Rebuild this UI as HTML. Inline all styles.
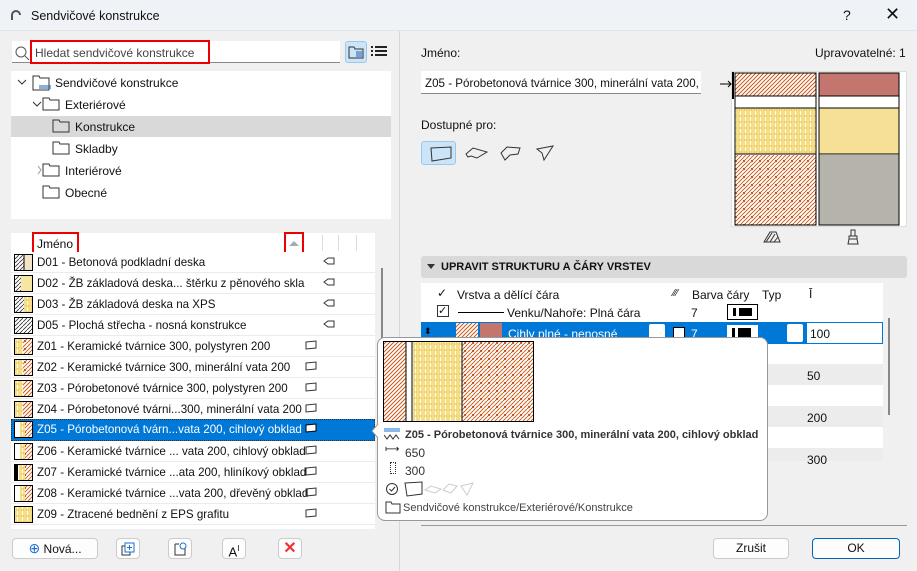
<!DOCTYPE html>
<html><head><meta charset="utf-8"><style>
*{box-sizing:border-box;margin:0;padding:0}
body{width:917px;height:571px;overflow:hidden;background:#f0f0f0;font-family:"Liberation Sans",sans-serif;font-size:12px;color:#111;position:relative}
.a{position:absolute}
.t{white-space:nowrap}
.row{position:absolute;left:11px;width:364px;height:21px;border-bottom:1px solid #ebebeb;background:#fff;font-size:11.6px}
.row .ic{position:absolute;left:3px;top:2px;width:19px;height:17px;border:1px solid #000}
.row .tx{position:absolute;left:26px;top:4px;white-space:nowrap}
.row .sy{position:absolute;top:4px;width:12px;height:10px}
.btn{position:absolute;background:#fdfdfd;border:1px solid #ccc;border-radius:4px;height:21px;text-align:center;line-height:19px}
</style></head><body>
<svg width="0" height="0" style="position:absolute"><defs>
<pattern id="br" width="4" height="4" patternUnits="userSpaceOnUse"><rect width="4" height="4" fill="#fff"/><path d="M0 4L4 0M-1 1L1 -1M3 5L5 3" stroke="#c8591a" stroke-width="1"/></pattern>
<pattern id="yl" width="5" height="6" patternUnits="userSpaceOnUse"><rect width="5" height="6" fill="#fffbe6"/><path d="M1 0V6M4 0V6M1 3H4" stroke="#e8c030" stroke-width="1" fill="none"/></pattern>
<pattern id="pb" width="8" height="8" patternUnits="userSpaceOnUse"><rect width="8" height="8" fill="#fff"/><path d="M0 8L8 0M-2 2L2 -2M6 10L10 6M0 4L4 0M4 8L8 4" stroke="#c8591a" stroke-width="0.9"/><rect x="1" y="1" width="2" height="2" fill="#c8591a"/></pattern>
<pattern id="gr" width="4" height="4" patternUnits="userSpaceOnUse"><rect width="4" height="4" fill="#fff"/><path d="M0 4L4 0" stroke="#333" stroke-width="0.8"/></pattern>
</defs></svg>

<div class="a" style="left:0;top:0;width:917px;height:31px;background:#eff2f7;border-bottom:1px solid #e3e3e3"></div>
<div class="a t" style="left:31px;top:9px;font-size:12.5px">Sendvičové konstrukce</div>
<svg class="a" style="left:10px;top:9px" width="12" height="12"><path d="M2 11V6a4 4 0 0 1 8 0" stroke="#555" stroke-width="2" fill="none"/></svg>
<div class="a t" style="left:843px;top:7px;font-size:14px">?</div>
<div class="a t" style="left:885px;top:4px;font-size:18px">✕</div>

<div class="a" style="left:399px;top:31px;width:1px;height:540px;background:#d8d8d8"></div>

<div class="a" style="left:12px;top:41px;width:328px;height:22px;background:#fff;border-bottom:1px solid #888"></div>
<svg class="a" style="left:14px;top:45px" width="16" height="16"><circle cx="7" cy="7" r="5" stroke="#555" fill="none"/><path d="M11 11L15 15" stroke="#555"/></svg>
<div class="a" style="left:30px;top:40px;width:180px;height:24px;border:2px solid #e00"></div>
<div class="a t" style="left:35px;top:46px;color:#444">Hledat sendvičové konstrukce</div>
<div class="a" style="left:345px;top:41px;width:22px;height:22px;background:#cce4f7;border:1px solid #99c9ef;border-radius:3px"></div>
<svg class="a" style="left:348px;top:45px" width="16" height="14"><path d="M1 2H6L7 4H15V13H1Z" stroke="#333" fill="none"/><path d="M8 7H14M8 9H14M8 11H14" stroke="#1a5fb4"/></svg>
<svg class="a" style="left:371px;top:46px" width="16" height="12"><path d="M0 1H2M4 1H16M0 5H2M4 5H16M0 9H2M4 9H16" stroke="#222" stroke-width="2"/></svg>

<div class="a" style="left:11px;top:71px;width:380px;height:148px;background:#fff"></div>
<div class="a" style="left:11px;top:116px;width:380px;height:21px;background:#d9d9d9"></div>
<svg class="a" style="left:11px;top:71px" width="150" height="148">
<g stroke="#333" fill="none">
<path d="M7 9l4 4 4-4"/><path d="M22 31l4 4 4-4"/><path d="M27 95l3 4-3 4" stroke="#999"/>
<path d="M22 5h6l1 2h9v12H22Z"/><path d="M28 15h12M28 17h12" stroke="#1a5fb4"/>
<path d="M32 27h6l1 2h9v10H32Z"/>
<path d="M42 49h6l1 2h9v10H42Z"/><path d="M42 71h6l1 2h9v10H42Z"/>
<path d="M32 93h6l1 2h9v10H32Z"/><path d="M32 115h6l1 2h9v10H32Z"/>
</g></svg>
<div class="a t" style="left:55px;top:76px">Sendvičové konstrukce</div>
<div class="a t" style="left:65px;top:98px">Exteriérové</div>
<div class="a t" style="left:75px;top:120px">Konstrukce</div>
<div class="a t" style="left:75px;top:142px">Skladby</div>
<div class="a t" style="left:65px;top:164px">Interiérové</div>
<div class="a t" style="left:65px;top:186px">Obecné</div>

<div class="a" style="left:11px;top:233px;width:364px;height:20px;background:#fff"></div>
<div class="a" style="left:322px;top:235px;width:1px;height:16px;background:#ddd"></div>
<div class="a" style="left:338px;top:235px;width:1px;height:16px;background:#ddd"></div>
<div class="a" style="left:356px;top:235px;width:1px;height:16px;background:#ddd"></div>
<div class="a" style="left:32px;top:232px;width:47px;height:22px;border:2px solid #e00"></div>
<div class="a t" style="left:37px;top:237px">Jméno</div>
<div class="a" style="left:284px;top:232px;width:20px;height:22px;border:2px solid #e00"></div>
<svg class="a" style="left:288px;top:240px" width="12" height="8"><path d="M1 6L6 1L11 6Z" fill="#aaa"/></svg>

<div class="row" style="top:252px"><div class="ic"><svg width="17" height="15"><rect width="9" height="15" fill="url(#gr)"/><rect x="9" width="8" height="15" fill="#f3e3c8"/><path d="M9 0V15" stroke="#000"/></svg></div><div class="tx">D01 - Betonová podkladní deska</div><svg class="sy" style="left:312px" viewBox="0 0 12 10"><path d="M1 5L5 2H11V8H5Z" stroke="#333" fill="none"/></svg></div>
<div class="row" style="top:273px"><div class="ic"><svg width="17" height="15"><rect width="6" height="15" fill="url(#gr)"/><rect x="6" width="11" height="15" fill="#f6e6a0"/></svg></div><div class="tx">D02 - ŽB základová deska... štěrku z pěnového skla</div><svg class="sy" style="left:312px" viewBox="0 0 12 10"><path d="M1 5L5 2H11V8H5Z" stroke="#333" fill="none"/></svg></div>
<div class="row" style="top:294px"><div class="ic"><svg width="17" height="15"><rect width="9" height="15" fill="url(#gr)"/><rect x="9" width="8" height="15" fill="url(#yl)"/></svg></div><div class="tx">D03 - ŽB základová deska na XPS</div><svg class="sy" style="left:312px" viewBox="0 0 12 10"><path d="M1 5L5 2H11V8H5Z" stroke="#333" fill="none"/></svg></div>
<div class="row" style="top:315px"><div class="ic"><svg width="17" height="15"><rect width="17" height="15" fill="url(#gr)"/></svg></div><div class="tx">D05 - Plochá střecha - nosná konstrukce</div><svg class="sy" style="left:312px" viewBox="0 0 12 10"><path d="M1 5L5 2H11V8H5Z" stroke="#333" fill="none"/></svg></div>
<div class="row" style="top:336px"><div class="ic"><svg width="17" height="15"><rect width="8" height="15" fill="url(#yl)"/><rect x="8" width="9" height="15" fill="url(#pb)"/></svg></div><div class="tx">Z01 - Keramické tvárnice 300, polystyren 200</div><svg class="sy" style="left:294px" viewBox="0 0 12 10"><path d="M1 2L11 1V8L1 9Z" stroke="#333" fill="none"/></svg></div>
<div class="row" style="top:357px"><div class="ic"><svg width="17" height="15"><rect width="8" height="15" fill="url(#yl)"/><rect x="8" width="9" height="15" fill="url(#pb)"/></svg></div><div class="tx">Z02 - Keramické tvárnice 300, minerální vata 200</div><svg class="sy" style="left:294px" viewBox="0 0 12 10"><path d="M1 2L11 1V8L1 9Z" stroke="#333" fill="none"/></svg></div>
<div class="row" style="top:378px"><div class="ic"><svg width="17" height="15"><rect width="8" height="15" fill="url(#yl)"/><rect x="8" width="9" height="15" fill="url(#br)"/></svg></div><div class="tx">Z03 - Pórobetonové tvárnice 300, polystyren 200</div><svg class="sy" style="left:294px" viewBox="0 0 12 10"><path d="M1 2L11 1V8L1 9Z" stroke="#333" fill="none"/></svg></div>
<div class="row" style="top:399px"><div class="ic"><svg width="17" height="15"><rect width="8" height="15" fill="url(#yl)"/><rect x="8" width="9" height="15" fill="url(#br)"/></svg></div><div class="tx">Z04 - Pórobetonové tvárni...300, minerální vata 200</div><svg class="sy" style="left:294px" viewBox="0 0 12 10"><path d="M1 2L11 1V8L1 9Z" stroke="#333" fill="none"/></svg></div>
<div class="row" style="top:419px;height:22px;background:#0078d7;color:#fff;border:1px dotted #333"><div class="ic" style="left:2px;top:1px"><svg width="17" height="15"><rect width="17" height="15" fill="#fff"/><rect x="5" width="5" height="15" fill="url(#yl)"/><rect x="10" width="7" height="15" fill="url(#pb)"/></svg></div><div class="tx" style="left:25px;top:3px">Z05 - Pórobetonová tvárn...vata 200, cihlový obklad</div><svg class="sy" style="left:293px;top:3px" viewBox="0 0 12 10"><path d="M1 2L11 1V8L1 9Z" stroke="#000" fill="#fff"/></svg></div>
<div class="row" style="top:441px"><div class="ic"><svg width="17" height="15"><rect width="17" height="15" fill="#fff"/><rect x="5" width="5" height="15" fill="url(#yl)"/><rect x="10" width="7" height="15" fill="url(#pb)"/></svg></div><div class="tx">Z06 - Keramické tvárnice ... vata 200, cihlový obklad</div><svg class="sy" style="left:294px" viewBox="0 0 12 10"><path d="M1 2L11 1V8L1 9Z" stroke="#333" fill="none"/></svg></div>
<div class="row" style="top:462px"><div class="ic"><svg width="17" height="15"><rect width="3" height="15" fill="#000"/><rect x="4" width="6" height="15" fill="url(#yl)"/><rect x="10" width="7" height="15" fill="url(#pb)"/></svg></div><div class="tx">Z07 - Keramické tvárnice ...ata 200, hliníkový obklad</div><svg class="sy" style="left:294px" viewBox="0 0 12 10"><path d="M1 2L11 1V8L1 9Z" stroke="#333" fill="none"/></svg></div>
<div class="row" style="top:483px"><div class="ic"><svg width="17" height="15"><rect width="17" height="15" fill="#fff"/><rect x="5" width="5" height="15" fill="url(#yl)"/><rect x="10" width="7" height="15" fill="url(#pb)"/></svg></div><div class="tx">Z08 - Keramické tvárnice ...vata 200, dřevěný obklad</div><svg class="sy" style="left:294px" viewBox="0 0 12 10"><path d="M1 2L11 1V8L1 9Z" stroke="#333" fill="none"/></svg></div>
<div class="row" style="top:504px"><div class="ic"><svg width="17" height="15"><rect width="17" height="15" fill="url(#yl)"/></svg></div><div class="tx">Z09 - Ztracené bednění z EPS grafitu</div><svg class="sy" style="left:294px" viewBox="0 0 12 10"><path d="M1 2L11 1V8L1 9Z" stroke="#333" fill="none"/></svg></div>
<div class="a" style="left:11px;top:525px;width:364px;height:4px;background:#fff"></div>
<div class="a" style="left:381px;top:268px;width:2px;height:74px;background:#888"></div>

<div class="btn" style="left:12px;top:538px;width:86px"><span style="color:#1a6fd6;font-size:14px">⊕</span> Nová...</div>
<div class="btn" style="left:116px;top:538px;width:24px"><svg width="14" height="14" style="margin-top:3px"><rect x="1" y="4" width="8" height="9" stroke="#333" fill="#fff"/><rect x="4" y="1" width="9" height="9" stroke="#1a6fd6" fill="#fff"/><path d="M8.5 3v5M6 5.5h5" stroke="#1a6fd6"/></svg></div>
<div class="btn" style="left:168px;top:538px;width:24px"><svg width="14" height="14" style="margin-top:3px"><path d="M2 2H6M2 2V13H12V6" stroke="#333" fill="none"/><circle cx="10" cy="4" r="3" stroke="#1a6fd6" fill="#fff"/></svg></div>
<div class="btn" style="left:222px;top:538px;width:24px;font-size:13px">A<sup style="font-size:8px">I</sup></div>
<div class="btn" style="left:278px;top:538px;width:24px;color:#e33;font-size:16px;font-weight:bold">✕</div>

<div class="a t" style="left:421px;top:46px">Jméno:</div>
<div class="a t" style="left:815px;top:46px">Upravovatelné: 1</div>
<div class="a" style="left:421px;top:71px;width:280px;height:23px;background:#fff;border-bottom:1px solid #888"></div>
<div class="a t" style="left:425px;top:77px;width:273px;overflow:hidden;font-size:11.6px">Z05 - Pórobetonová tvárnice 300, minerální vata 200, cihlový</div>
<div class="a t" style="left:421px;top:118px">Dostupné pro:</div>
<div class="a" style="left:421px;top:141px;width:35px;height:24px;background:#cce4f7;border:1px solid #99c9ef;border-radius:3px"></div>
<svg class="a" style="left:425px;top:143px" width="130" height="22"><g stroke="#333" fill="none"><path d="M6 5L26 4V15L7 18Z"/><path d="M41 11L48 5L62 9L52 15L46 13L43 14Z"/><path d="M76 10L82 4L95 5L93 11L85 12L80 17Z"/><path d="M112 6L128 3L119 17L117 10Z"/></g></svg>

<div class="a" style="left:731px;top:71px;width:176px;height:156px;background:#fff;border:1px solid #ddd"></div>
<svg class="a" style="left:718px;top:71px" width="190" height="157">
<rect x="17" y="2" width="81" height="23" fill="url(#br)"/>
<rect x="17" y="37" width="81" height="46" fill="url(#yl)"/>
<rect x="17" y="84" width="81" height="70" fill="url(#pb)"/>
<rect x="101" y="2" width="80" height="23" fill="#c4766e"/>
<rect x="101" y="37" width="80" height="46" fill="#f5e096"/>
<rect x="101" y="84" width="80" height="70" fill="#b6b3ac"/>
<g stroke="#000" fill="none"><rect x="17" y="2" width="81" height="152"/><rect x="101" y="2" width="80" height="152"/><path d="M17 25H98M17 37H98M17 83H98M101 25H181M101 37H181M101 83H181"/></g>
<path d="M15 1V28" stroke="#000" stroke-width="2"/><path d="M2 13H13M10 10L13 13L10 16" stroke="#000" fill="none"/>
</svg>
<svg class="a" style="left:762px;top:230px" width="20" height="14"><path d="M2 12L8 2H14L18 12Z" stroke="#333" fill="none"/><path d="M4 12L10 3M8 12L13 4M12 12L16 7" stroke="#333"/></svg>
<svg class="a" style="left:846px;top:229px" width="14" height="16"><path d="M5 1H9V7H5ZM3 7H11V10H3ZM3 10L2 15H12L11 10" stroke="#333" fill="none"/></svg>

<div class="a" style="left:421px;top:256px;width:486px;height:22px;background:#d9d9d9;border-radius:3px"></div>
<svg class="a" style="left:427px;top:264px" width="8" height="6"><path d="M0 0H8L4 5Z" fill="#333"/></svg>
<div class="a t" style="left:441px;top:261px;font-weight:bold;font-size:11px">UPRAVIT STRUKTURU A ČÁRY VRSTEV</div>

<div class="a" style="left:421px;top:283px;width:462px;height:178px;background:#fff"></div>
<div class="a" style="left:421px;top:364px;width:462px;height:21px;background:#ececec"></div>
<div class="a" style="left:421px;top:406px;width:462px;height:21px;background:#ececec"></div>
<div class="a" style="left:421px;top:448px;width:462px;height:13px;background:#ececec"></div>
<div class="a" style="left:421px;top:322px;width:462px;height:22px;background:#0078d7;border:1px solid #0078d7"></div>
<div class="a" style="left:807px;top:323px;width:75px;height:20px;background:#fff"></div>
<div class="a t" style="left:810px;top:327px">100</div>
<div class="a t" style="left:807px;top:369px">50</div>
<div class="a t" style="left:807px;top:411px">200</div>
<div class="a t" style="left:807px;top:453px">300</div>
<div class="a t" style="left:457px;top:288px">Vrstva a dělící čára</div>
<div class="a t" style="left:692px;top:288px">Barva čáry</div>
<div class="a t" style="left:762px;top:288px">Typ</div>
<div class="a t" style="left:673px;top:288px;font-size:10px">⁄⁄⁄</div>
<div class="a t" style="left:809px;top:287px">Ī</div>
<div class="a t" style="left:437px;top:286px">✓</div>
<div class="a" style="left:437px;top:305px;width:12px;height:12px;border:1px solid #333;font-size:11px;line-height:10px">✓</div>
<div class="a" style="left:458px;top:312px;width:46px;height:1px;background:#000"></div>
<div class="a t" style="left:507px;top:306px">Venku/Nahoře: Plná čára</div>
<div class="a t" style="left:691px;top:306px">7</div>
<div class="a" style="left:727px;top:304px;width:31px;height:16px;border:1px solid #000;background:#fff"><div style="position:absolute;left:5px;top:3px;width:3px;height:8px;background:#000"></div><div style="position:absolute;left:11px;top:3px;width:13px;height:8px;background:#000"></div></div>
<div class="a t" style="left:424px;top:326px;color:#000;font-size:9px">⬍</div>
<div class="a" style="left:456px;top:323px;width:22px;height:20px"><svg width="22" height="20"><rect width="22" height="20" fill="url(#br)"/></svg></div>
<div class="a" style="left:480px;top:323px;width:22px;height:20px;background:#c4766e"></div>
<div class="a t" style="left:508px;top:327px;color:#fff">Cihly plné - nenosné</div>
<div class="a" style="left:649px;top:324px;width:16px;height:18px;background:#fff;border-radius:2px"></div>
<div class="a" style="left:673px;top:327px;width:12px;height:12px;border:1px solid #000;background:#fff"></div>
<div class="a t" style="left:691px;top:327px;color:#fff">7</div>
<div class="a" style="left:727px;top:325px;width:31px;height:16px;background:#fff"><div style="position:absolute;left:5px;top:3px;width:3px;height:10px;background:#000"></div><div style="position:absolute;left:11px;top:3px;width:13px;height:10px;background:#000"></div></div>
<div class="a" style="left:787px;top:324px;width:16px;height:18px;background:#fff;border-radius:2px"></div>
<div class="a" style="left:888px;top:318px;width:2px;height:97px;background:#888"></div>
<div class="a" style="left:421px;top:525px;width:486px;height:1px;background:#999"></div>

<div class="a" style="left:377px;top:337px;width:391px;height:184px;background:#fff;border:1px solid #999;border-radius:8px"></div>
<svg class="a" style="left:371px;top:424px" width="8" height="14"><path d="M7 0L1 7L7 14" fill="#fff" stroke="#999"/></svg>
<svg class="a" style="left:383px;top:341px" width="152" height="82">
<rect x="1" y="1" width="22" height="80" fill="url(#br)"/>
<rect x="29" y="1" width="50" height="80" fill="url(#yl)"/>
<rect x="79" y="1" width="71" height="80" fill="url(#pb)"/>
<g stroke="#000" fill="none"><rect x="0.5" y="0.5" width="150" height="80"/><path d="M23 0V81M29 0V81M79 0V81"/></g>
</svg>
<svg class="a" style="left:384px;top:427px" width="16" height="14"><path d="M0 2H16M0 4H16" stroke="#1a6fd6"/><path d="M0 8l3 4 3-4 3 4 3-4 3 4" stroke="#333" fill="none"/></svg>
<div class="a t" style="left:405px;top:429px;font-weight:bold;font-size:11px;color:#333">Z05 - Pórobetonová tvárnice 300, minerální vata 200, cihlový obklad</div>
<div class="a t" style="left:385px;top:444px;font-size:10px">⟼</div>
<div class="a t" style="left:405px;top:446px;color:#333">650</div>
<div class="a" style="left:390px;top:462px;width:6px;height:12px;border:1px dotted #333"></div>
<div class="a t" style="left:405px;top:464px;color:#333">300</div>
<svg class="a" style="left:385px;top:480px" width="100" height="18"><circle cx="7" cy="9" r="5.5" stroke="#333" fill="none"/><path d="M4.5 9l2 2 3.5-4" stroke="#333" fill="none"/><path d="M20 3L37 2V14L22 16Z" stroke="#333" fill="none"/><path d="M40 10L46 6L56 9L50 13Z M58 10L64 4L72 6L66 13Z M76 6L88 3L82 15Z" stroke="#ccc" fill="none"/></svg>
<svg class="a" style="left:385px;top:500px" width="16" height="14"><path d="M1 2H6L7 4H15V13H1Z" stroke="#333" fill="none"/></svg>
<div class="a t" style="left:403px;top:502px;color:#444;font-size:11px">Sendvičové konstrukce/Exteriérové/Konstrukce</div>

<div class="btn" style="left:713px;top:538px;width:76px">Zrušit</div>
<div class="btn" style="left:812px;top:538px;width:88px;border:1px solid #0067c0">OK</div>
</body></html>
